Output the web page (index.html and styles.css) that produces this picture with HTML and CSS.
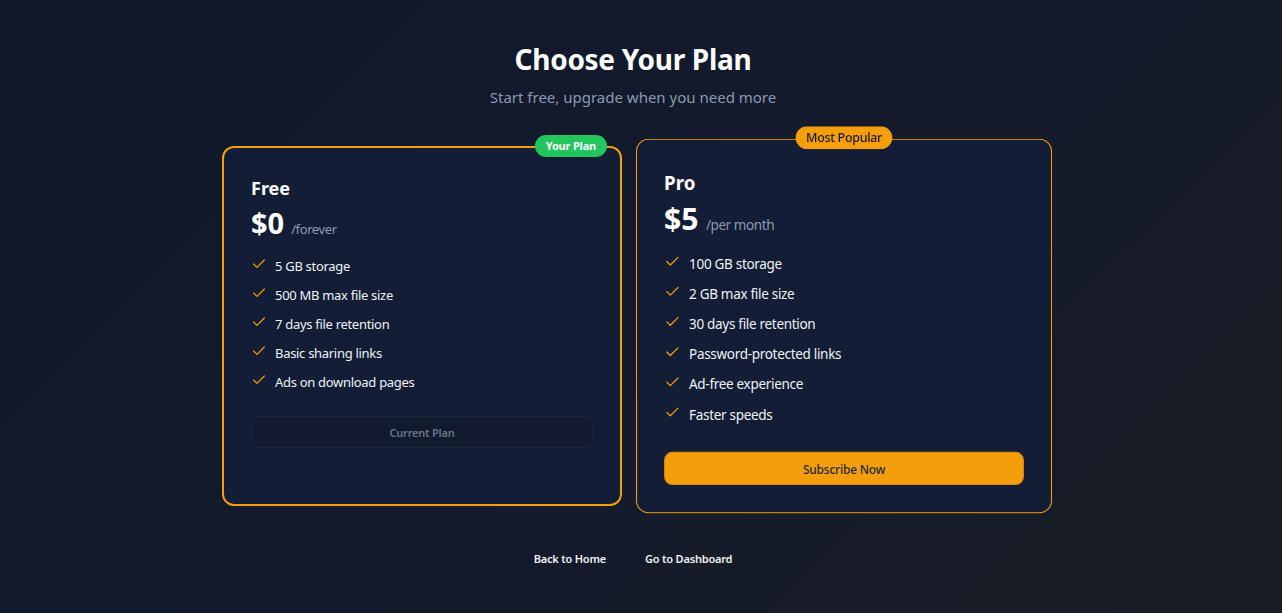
FILE: index.html
```html
<!DOCTYPE html>
<html lang="en">
<head>
<meta charset="utf-8">
<title>Choose Your Plan</title>
<link rel="stylesheet" href="styles.css">
</head>
<body>
<main class="page">
  <header class="head">
    <h1 class="title">Choose Your Plan</h1>
    <p class="subtitle">Start free, upgrade when you need more</p>
  </header>

  <section class="plans">
    <article class="card card-free">
      <span class="badge badge-current">Your Plan</span>
      <h2 class="plan-name">Free</h2>
      <div class="price"><span class="amount">$0</span><span class="period">/forever</span></div>
      <ul class="features">
        <li><svg class="check" viewBox="0 0 24 24"><polyline points="20 6 9 17 4 12"/></svg>5 GB storage</li>
        <li><svg class="check" viewBox="0 0 24 24"><polyline points="20 6 9 17 4 12"/></svg>500 MB max file size</li>
        <li><svg class="check" viewBox="0 0 24 24"><polyline points="20 6 9 17 4 12"/></svg>7 days file retention</li>
        <li><svg class="check" viewBox="0 0 24 24"><polyline points="20 6 9 17 4 12"/></svg>Basic sharing links</li>
        <li><svg class="check" viewBox="0 0 24 24"><polyline points="20 6 9 17 4 12"/></svg>Ads on download pages</li>
      </ul>
      <button class="btn btn-current" type="button">Current Plan</button>
    </article>

    <article class="card card-pro">
      <span class="badge badge-popular">Most Popular</span>
      <h2 class="plan-name">Pro</h2>
      <div class="price"><span class="amount">$5</span><span class="period">/per month</span></div>
      <ul class="features">
        <li><svg class="check" viewBox="0 0 24 24"><polyline points="20 6 9 17 4 12"/></svg>100 GB storage</li>
        <li><svg class="check" viewBox="0 0 24 24"><polyline points="20 6 9 17 4 12"/></svg>2 GB max file size</li>
        <li><svg class="check" viewBox="0 0 24 24"><polyline points="20 6 9 17 4 12"/></svg>30 days file retention</li>
        <li><svg class="check" viewBox="0 0 24 24"><polyline points="20 6 9 17 4 12"/></svg>Password-protected links</li>
        <li><svg class="check" viewBox="0 0 24 24"><polyline points="20 6 9 17 4 12"/></svg>Ad-free experience</li>
        <li><svg class="check" viewBox="0 0 24 24"><polyline points="20 6 9 17 4 12"/></svg>Faster speeds</li>
      </ul>
      <button class="btn btn-subscribe" type="button">Subscribe Now</button>
    </article>
  </section>

  <nav class="links">
    <a href="#" class="link">Back to Home</a>
    <a href="#" class="link">Go to Dashboard</a>
  </nav>
</main>
</body>
</html>
```

FILE: styles.css
```css
* { box-sizing: border-box; }

html, body { height: 100%; }

body {
  margin: 0;
  padding-right: 16px;
  font-family: "Noto Sans", "Open Sans", "DejaVu Sans", sans-serif;
  color: #f1f5f9;
  background: linear-gradient(135deg, #0f172a 0%, #121a2c 45%, #1b1d25 100%);
  min-height: 613px;
}

.page {
  display: flex;
  flex-direction: column;
  align-items: center;
  padding-top: 40px;
}

.head { text-align: center; }

.title {
  margin: 0;
  font-size: 28px;
  line-height: 38px;
  font-weight: 700;
  color: #ffffff;
  letter-spacing: -0.3px;
}

.subtitle {
  margin: 8px 0 0;
  font-size: 15px;
  line-height: 22px;
  color: #8b9ab1;
}

.plans {
  display: grid;
  grid-template-columns: 400px 400px;
  gap: 22px;
  margin-top: 38px;
}

.card {
  position: relative;
  background: #131d35;
  border-radius: 12px;
  display: flex;
  flex-direction: column;
}

.card-free {
  border: 2px solid #f59e0b;
  padding: 26px 27px 27px;
}

.card-pro {
  border: 1px solid #f59e0b;
  padding: 27px 26px 26px;
  transform: scale(1.04);
}

.card-pro .btn { margin-top: 26px; }

.badge {
  position: absolute;
  border-radius: 999px;
  white-space: nowrap;
}

.badge-current {
  top: -13px;
  right: 13px;
  background: #22c55e;
  color: #ffffff;
  font-size: 11px;
  line-height: 22px;
  font-weight: 700;
  padding: 0 11px;
  letter-spacing: -0.2px;
}

.badge-popular {
  top: -13px;
  left: 50%;
  transform: translateX(-50%);
  background: #f59e0b;
  color: #1c1917;
  font-size: 12px;
  line-height: 22px;
  font-weight: 500;
  padding: 0 10px;
  letter-spacing: -0.3px;
}

.plan-name {
  margin: 0;
  font-size: 18px;
  line-height: 28px;
  font-weight: 700;
  color: #ffffff;
}

.price {
  display: flex;
  align-items: baseline;
  gap: 7px;
  margin-top: 1px;
}

.amount {
  font-size: 29px;
  line-height: 40px;
  font-weight: 700;
  color: #ffffff;
}

.period {
  font-size: 13px;
  color: #8b9ab1;
  letter-spacing: -0.4px;
}

.features {
  list-style: none;
  margin: 13px 0 0;
  padding: 0;
  display: flex;
  flex-direction: column;
  gap: 9px;
}

.features li {
  display: flex;
  align-items: center;
  gap: 8px;
  font-size: 13px;
  line-height: 20px;
  color: #eef2f7;
  letter-spacing: -0.3px;
}

.check {
  width: 16px;
  height: 16px;
  flex: none;
  fill: none;
  stroke: #f59e0b;
  stroke-width: 1.8;
  stroke-linecap: round;
  stroke-linejoin: round;
  margin-top: -4px;
}

.btn {
  width: 100%;
  height: 32px;
  margin-top: 24px;
  border-radius: 8px;
  font-family: inherit;
  font-size: 11px;
  font-weight: 600;
  letter-spacing: -0.2px;
  cursor: pointer;
}

.btn-current {
  background: #111a2e;
  border: 1px solid #1c2740;
  color: #6b7588;
}

.btn-subscribe {
  background: #f59e0b;
  border: 1px solid #d98b08;
  color: #1f2937;
  font-weight: 500;
  font-size: 11.5px;
}

.links {
  display: flex;
  gap: 39px;
  margin-top: 45px;
}

.link {
  font-size: 11px;
  line-height: 16px;
  font-weight: 600;
  color: #eef2f7;
  text-decoration: none;
  letter-spacing: -0.2px;
}
```
